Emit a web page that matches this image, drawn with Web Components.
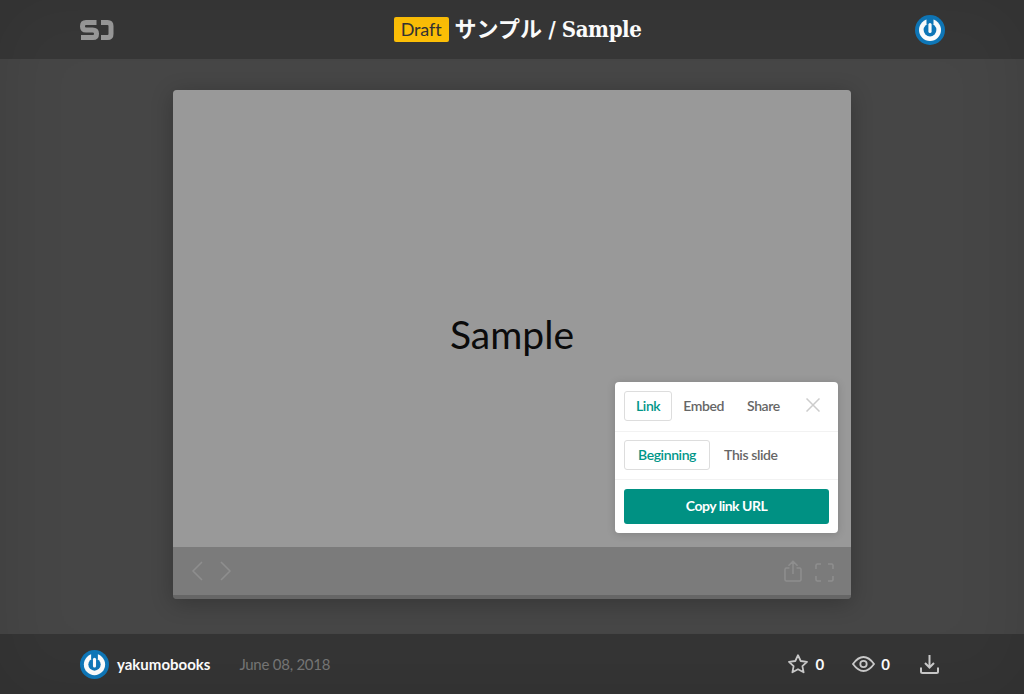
<!DOCTYPE html>
<html lang="en"><head><meta charset="utf-8"><title>Sample</title>
<style>
html,body{margin:0;padding:0;height:100%;background:#464646}
body{font-family:Lato,"Noto Sans CJK JP",sans-serif;overflow:hidden}
</style></head><body>
<deck-page></deck-page>
<script>
function def(name,html){
  customElements.define(name,class extends HTMLElement{
    constructor(){super();const t=document.createElement('template');t.innerHTML=html;this.attachShadow({mode:'open'}).appendChild(t.content.cloneNode(true));}
  });
}
def('user-avatar',`<style>:host{display:block;width:var(--s,30px);height:var(--s,30px)}svg{display:block;width:100%;height:100%}</style>
<svg viewBox="0 0 30 30"><circle cx="15" cy="15" r="15" fill="#0f78ba"/><circle cx="15" cy="15" r="11" fill="#fff"/><circle cx="15" cy="15" r="6.400" fill="#0f78ba"/><path d="M15 3V9.500" stroke="#0f78ba" stroke-width="7"/><path d="M15 9.500V16.500" stroke="#fff" stroke-width="3.200" stroke-linecap="round"/></svg>`);
def('site-logo',`<style>:host{display:block;width:34px;height:22px}svg{display:block}</style>
<svg width="34" height="22" viewBox="0 0 34 22" fill="none" stroke="#999" stroke-width="5"><path d="M16.500 3.500H6Q2.500 3.500 2.500 7V7.500Q2.500 11 6 11H12.500Q16.500 11 16.500 14.500V15Q16.500 18.500 13 18.500H1"/><path d="M21 3.500H27.500Q31 3.500 31 7V15Q31 18.500 27.500 18.500H21"/></svg>`);
def('draft-badge',`<style>:host{display:block;background:#ffc107;color:#333;border-radius:2px;font:400 18px/25px Lato,sans-serif;padding:0 7px;height:25px;letter-spacing:-.1px}</style><slot></slot>`);
def('top-bar',`<style>:host{display:flex;align-items:center;justify-content:space-between;height:59px;padding:0 79px 0 80px;background:#373737;flex:none;box-sizing:border-box}
.t{display:flex;align-items:center;gap:6px;color:#fff;font:700 22px/30px "DejaVu Serif Condensed","DejaVu Serif","Noto Sans CJK JP",serif;margin-left:6px;letter-spacing:-.4px;position:relative;top:-.5px}
.t span{font-family:"Noto Sans CJK JP",sans-serif;letter-spacing:0}
.h{position:relative;top:-1.500px}</style>
<site-logo></site-logo>
<div class="t"><draft-badge>Draft</draft-badge><div class="h"><span>サンプル</span> / Sample</div></div>
<user-avatar></user-avatar>`);
def('tab-button',`<style>:host{display:flex;align-items:center;justify-content:center;box-sizing:border-box;height:30px;padding:0 var(--px,11px) 1px;border:1px solid transparent;border-radius:3px;color:#666;font:600 14px/1 Lato,sans-serif;letter-spacing:-.4px}
:host([active]){border-color:#ddd;color:#009688}</style><slot></slot>`);
def('share-popup',`<style>:host{position:absolute;left:442px;top:292px;width:223px;height:151px;background:#fff;border-radius:4px;display:flex;flex-direction:column;box-sizing:border-box;box-shadow:0 1px 8px rgba(0,0,0,.16)}
.r{display:flex;align-items:flex-start;box-sizing:border-box;padding:0 9px;border-bottom:1px solid #f2f2f2;flex:none}
.x{margin:7px 9px 0 auto;display:block}
.b{margin:9px;height:35px;border-radius:3px;background:#009183;color:#fff;font:700 14px/34px Lato,sans-serif;text-align:center;letter-spacing:-.5px}</style>
<div class="r" style="height:50px;padding-top:9px"><tab-button active>Link</tab-button><tab-button style="margin-left:-1px">Embed</tab-button><tab-button style="margin-left:-1px">Share</tab-button>
<svg class="x" width="14" height="14" viewBox="0 0 14 14" stroke="#ccc" stroke-width="1.500" fill="none"><path d="M.5.5l13 13M13.500.5l-13 13"/></svg></div>
<div class="r" style="height:48px;padding-top:8px"><tab-button active style="--px:13px">Beginning</tab-button><tab-button style="--px:13px">This slide</tab-button></div>
<div class="b">Copy link URL</div>`);
def('slide-controls',`<style>:host{display:flex;align-items:center;justify-content:space-between;height:48px;background:#7b7b7b;padding:0 17px 0 18px;flex:none;box-sizing:border-box}
div{display:flex;align-items:center}svg{display:block;fill:none;stroke:#8e8e8e;stroke-width:1.600;stroke-linejoin:round}</style>
<div style="gap:17px"><svg width="12" height="20" viewBox="0 0 12 20"><path d="M11 1L2 10l9 9"/></svg><svg width="12" height="20" viewBox="0 0 12 20"><path d="M1 1l9 9-9 9"/></svg></div>
<div style="gap:13px"><svg width="18" height="22" viewBox="0 0 18 22"><path d="M9 14V1.500M4.500 5.800L9 1.200l4.500 4.600M5.500 8H2.500Q1 8 1 9.500V19.500Q1 21 2.500 21H15.500Q17 21 17 19.500V9.500Q17 8 15.500 8H12.500"/></svg><svg style="margin-top:2px" width="19" height="19" viewBox="0 0 19 19"><path d="M1 6V2.500Q1 1 2.500 1H6M13 1H16.500Q18 1 18 2.500V6M18 13V16.500Q18 18 16.500 18H13M6 18H2.500Q1 18 1 16.500V13"/></svg></div>`);
def('slide-viewer',`<style>:host{display:flex;flex-direction:column;position:relative;width:678px;height:509px;border-radius:4px;background:#666;box-shadow:0 4px 22px rgba(0,0,0,.24)}
.s{height:457px;background:#999;border-radius:4px 4px 0 0;display:flex;align-items:center;justify-content:center;color:#0b0b0b;font:400 39px/1 Lato,sans-serif;padding-top:31px;box-sizing:border-box;flex:none}
.e{height:4px;background:#666;flex:none;border-radius:0 0 4px 4px}</style>
<div class="s">Sample</div><slide-controls></slide-controls><div class="e"></div><share-popup></share-popup>`);
def('stat-item',`<style>:host{display:flex;align-items:center;gap:8px;color:#fff;font:700 15px/1 Lato,sans-serif}</style><slot name="i"></slot><slot></slot>`);
def('bottom-bar',`<style>:host{display:flex;align-items:center;height:60px;padding:0 85px 0 80px;background:#353535;flex:none;box-sizing:border-box}
svg{display:block;fill:none;stroke:#ccc;stroke-width:1.800}
.u{margin-left:8px;color:#fff;font:700 15px/1 Lato,sans-serif}.d{margin-left:29px;color:#777;font:400 15px/1 Lato,sans-serif;letter-spacing:-.25px}
.a{margin-left:auto;display:flex;align-items:center}user-avatar{--s:29px}</style>
<user-avatar></user-avatar><span class="u">yakumobooks</span><span class="d">June 08, 2018</span>
<div class="a">
<stat-item><svg slot="i" width="20" height="20" viewBox="0 0 20 20"><path stroke-linejoin="round" d="M10 1.200l2.700 5.800 6.300.8-4.600 4.300 1.200 6.200L10 15.200l-5.600 3.100 1.200-6.200L1 7.800l6.300-.8z"/></svg>0</stat-item>
<stat-item style="margin-left:28px;gap:6px"><svg slot="i" width="23" height="16" viewBox="0 0 23 16"><path d="M1 8Q6 1 11.500 1T22 8Q17 15 11.500 15T1 8z"/><circle cx="11.500" cy="8" r="3.200"/></svg>0</stat-item>
<svg style="margin-left:30px" width="19" height="20" viewBox="0 0 19 20"><path d="M9.500 1v12.500M5 9l4.500 4.500L14 9" stroke-width="2"/><path d="M1 13.500v4Q1 19 2.500 19h14q1.500 0 1.500-1.500v-4" stroke-width="2"/></svg>
</div>`);
def('deck-page',`<style>:host{display:flex;flex-direction:column;height:694px;background:#464646;position:relative}
main{flex:1;display:flex;justify-content:center;padding-top:31px;box-sizing:border-box}
.v{position:absolute;inset:0;pointer-events:none;box-shadow:inset 0 0 70px rgba(0,0,0,.1)}</style>
<top-bar></top-bar><main><slide-viewer></slide-viewer></main><bottom-bar></bottom-bar><div class="v"></div>`);
</script></body></html>
